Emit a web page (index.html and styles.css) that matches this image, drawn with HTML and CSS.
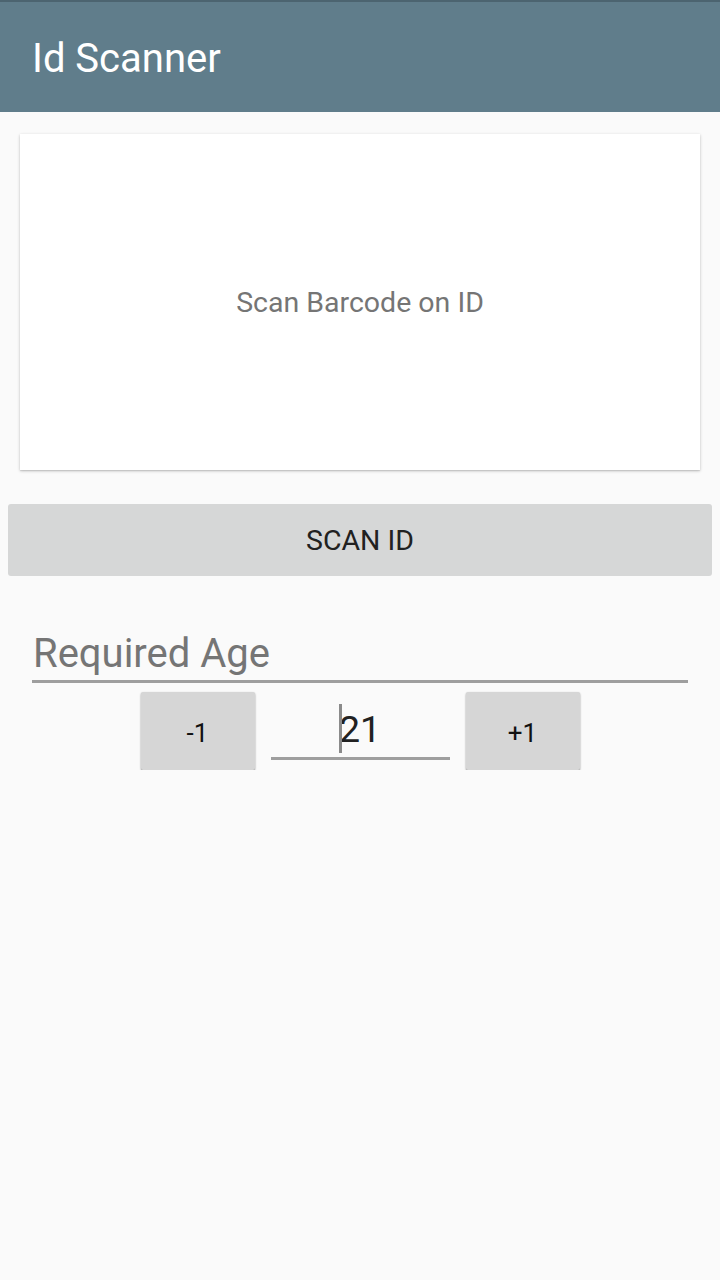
FILE: index.html
```html
<!DOCTYPE html>
<html>
<head>
<meta charset="utf-8">
<link rel="stylesheet" href="styles.css">
</head>
<body>
<header class="appbar"><h1 class="title">Id Scanner</h1></header>
<main class="content">
  <section class="card"><p class="card-text">Scan Barcode on ID</p></section>
  <button class="scan-btn">SCAN ID</button>
  <div class="age-field"><span class="age-label">Required Age</span></div>
  <div class="stepper">
    <button class="step-btn">-1</button>
    <div class="value-field"><span class="value"><span class="cursor"></span>21</span></div>
    <button class="step-btn">+1</button>
  </div>
</main>
</body>
</html>
```
FILE: styles.css
```css
html, body {
  margin: 0;
  padding: 0;
  background: #fafafa;
  font-family: Roboto, "Liberation Sans", sans-serif;
}
.appbar {
  height: 112px;
  background: #607d8b;
  box-sizing: border-box;
  border-top: 2px solid #4c6470;
  display: flex;
  align-items: center;
  padding-left: 32px;
  padding-top: 3px;
}
.title {
  margin: 0;
  color: #ffffff;
  font-weight: 400;
  font-size: 40px;
  line-height: 48px;
}
.content {
  display: flex;
  flex-direction: column;
  padding-top: 22px;
}
.card {
  margin: 0 20px;
  height: 336px;
  background: #ffffff;
  box-shadow: 0 1px 3px rgba(0,0,0,0.22), 0 1px 1px rgba(0,0,0,0.08);
  display: flex;
  align-items: center;
  justify-content: center;
}
.card-text {
  margin: 0;
  color: #757575;
  font-size: 28.5px;
}
.scan-btn {
  margin: 34px 8px 0;
  height: 72px;
  border: none;
  border-radius: 3px;
  background: #d6d7d7;
  color: #212121;
  font-family: Roboto, "Liberation Sans", sans-serif;
  font-size: 28.5px;
  font-weight: 400;
  padding: 0;
}
.age-field {
  margin: 56px 32px 0;
  border-bottom: 3px solid #9e9e9e;
  padding: 0 0 4px 1px;
  font-size: 40px;
  line-height: 44px;
  height: 44px;
}
.age-label {
  color: #757575;
}
.stepper {
  display: flex;
  justify-content: center;
  gap: 16px;
  margin-top: 9px;
}
.step-btn {
  width: 114px;
  height: 78px;
  border: none;
  border-radius: 2px;
  background: #d6d6d6;
  box-shadow: 0 1px 2px rgba(0,0,0,0.45);
  font-family: Roboto, "Liberation Sans", sans-serif;
  font-size: 26px;
  color: #111;
  padding: 3px 0 0;
}
.value-field {
  width: 179px;
  height: 63px;
  border-bottom: 3px solid #9e9e9e;
  display: flex;
  align-items: flex-end;
  justify-content: center;
  padding-bottom: 2px;
}
.value {
  position: relative;
  font-size: 37px;
  color: #212121;
  line-height: 50px;
}
.cursor {
  position: absolute;
  left: 0;
  bottom: 2px;
  width: 3px;
  height: 49px;
  background: #8a8a8a;
}
```
